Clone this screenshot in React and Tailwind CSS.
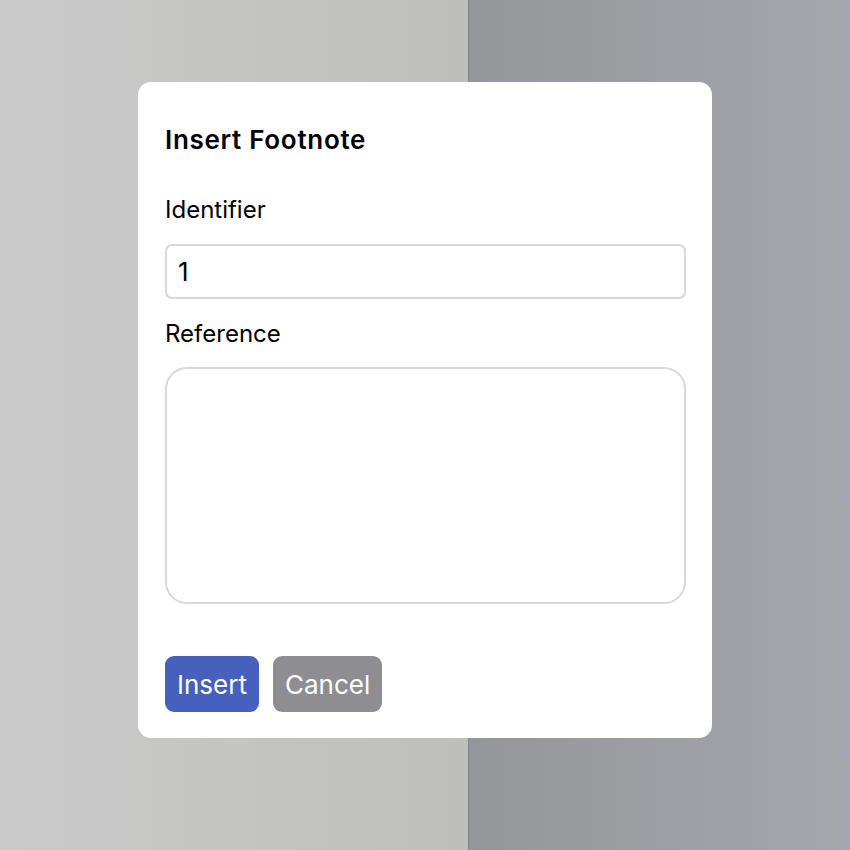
export default function App() {
  return (
    <div className="relative w-[850px] h-[850px] overflow-hidden" style={{ fontFamily: 'Inter, "Noto Sans", sans-serif' }}>
      <div className="flex h-full">
        <div className="w-[468px] h-full bg-gradient-to-r from-[#cacaca] to-[#bebfbc]" />
        <div className="w-px h-full bg-[#808285]" />
        <div className="flex-1 h-full bg-gradient-to-r from-[#949699] to-[#a6a7ae]" />
      </div>
      <div className="absolute inset-0 flex justify-center pt-[82px]">
        <div className="w-[574px] h-[656px] bg-white rounded-[13px] pl-[27px] pr-[26px] pt-[42px] pb-[26px] flex flex-col">
          <h2 className="text-[26px] font-semibold text-black leading-[32px] tracking-[0.7px]">Insert Footnote</h2>
          <label className="mt-[39px] text-[24px] text-black leading-[30px]">Identifier</label>
          <div className="mt-[19px] h-[55px] border-2 border-[#d8d8d8] rounded-[7px] flex items-center px-[11px] text-[26px] text-black">1</div>
          <label className="mt-[20px] text-[24px] text-black leading-[30px]">Reference</label>
          <div className="mt-[18px] h-[237px] border-2 border-[#d8d8d8] rounded-[22px]" />
          <div className="mt-auto flex gap-[14px]">
            <button className="h-[56px] px-[12px] rounded-[9px] bg-[#4660bd] text-white text-[26px]">Insert</button>
            <button className="h-[56px] px-[12px] rounded-[9px] bg-[#8e8e92] text-white text-[26px]">Cancel</button>
          </div>
        </div>
      </div>
    </div>
  );
}
